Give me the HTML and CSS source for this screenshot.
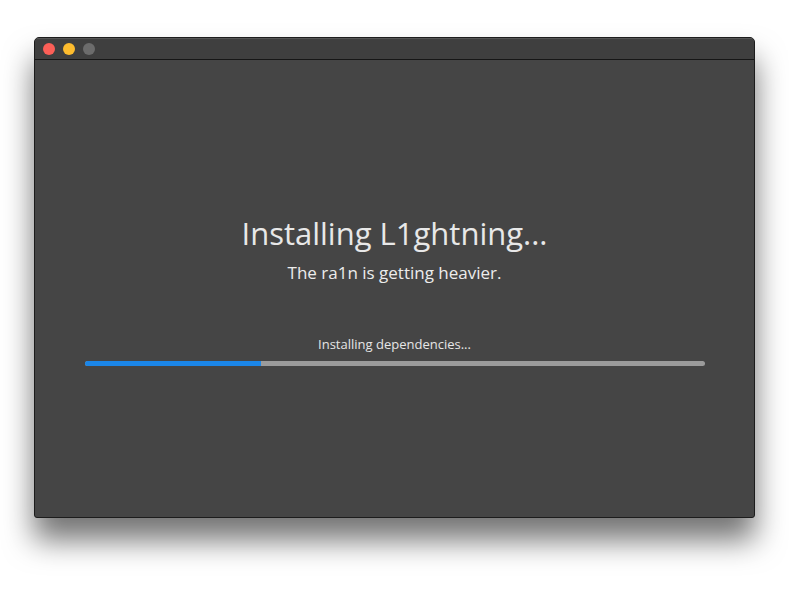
FILE: index.html
```html
<!DOCTYPE html>
<html>
<head>
<meta charset="utf-8">
<link rel="stylesheet" href="styles.css">
</head>
<body>
<div class="window">
  <div class="titlebar">
    <span class="light red"></span>
    <span class="light yellow"></span>
    <span class="light gray"></span>
  </div>
  <div class="content">
    <h1 class="title">Installing L1ghtning...</h1>
    <p class="subtitle">The ra1n is getting heavier.</p>
    <p class="status">Installing dependencies...</p>
    <div class="bar"><div class="fill" style="width:28.5%"></div></div>
  </div>
</div>
</body>
</html>
```
FILE: styles.css
```css
html, body {
  margin: 0;
  padding: 0;
  background: #ffffff;
}
body {
  width: 789px;
  height: 592px;
  overflow: hidden;
  font-family: "Open Sans", "DejaVu Sans", sans-serif;
}
.window {
  margin: 37px 0 0 34px;
  width: 719px;
  height: 479px;
  border: 1px solid #1c1c1c;
  border-radius: 5px 5px 3px 3px;
  background: #454545;
  box-shadow: 0 22px 30px rgba(0,0,0,0.55);
  overflow: hidden;
}
.titlebar {
  height: 21px;
  background: #3f3f3f;
  border-bottom: 1px solid #161616;
  display: flex;
  align-items: center;
  gap: 8px;
  padding-left: 8px;
  box-shadow: inset 0 1px 0 #555;
}
.light {
  width: 12px;
  height: 12px;
  border-radius: 50%;
}
.red { background: #fc5f57; }
.yellow { background: #fdbc2e; }
.gray { background: #6c6c6c; }
.content {
  display: flex;
  flex-direction: column;
  align-items: center;
  padding-top: 154px;
}
.title {
  margin: 0;
  font-size: 31px;
  line-height: 38px;
  font-weight: 400;
  color: #e8e8e8;
}
.subtitle {
  margin: 9px 0 0;
  font-size: 17px;
  line-height: 24px;
  font-weight: 500;
  color: #ececec;
}
.status {
  margin: 50px 0 0;
  font-size: 13px;
  line-height: 18px;
  color: #e6e6e6;
}
.bar {
  margin-top: 8px;
  width: 620px;
  height: 5px;
  border-radius: 3px;
  background: #9b9b9b;
  overflow: hidden;
}
.fill {
  height: 100%;
  background: #1b86e8;
}
```
